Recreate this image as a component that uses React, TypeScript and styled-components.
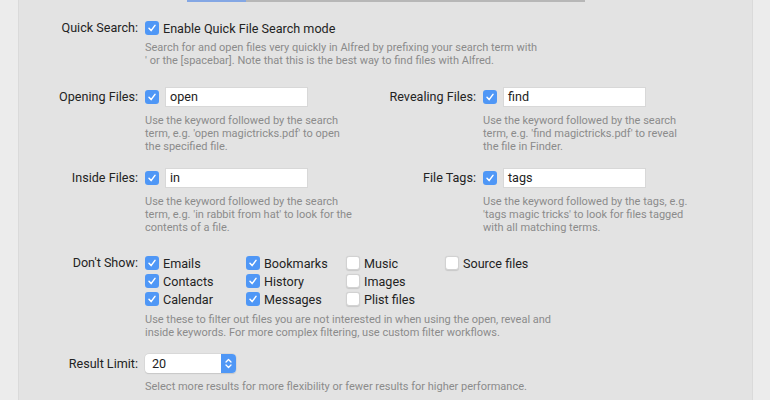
import React from "react";
import styled, { createGlobalStyle } from "styled-components";

const GlobalStyle = createGlobalStyle`
  html, body {
    margin: 0;
    padding: 0;
    background: #ececec;
    font-family: Roboto, "Liberation Sans", "Noto Sans", sans-serif;
    -webkit-font-smoothing: antialiased;
  }
`;

const Page = styled.div`
  width: 770px;
  height: 400px;
  display: flex;
  overflow: hidden;
  background: #ececec;
`;

const Panel = styled.div`
  margin-left: 18px;
  width: 735px;
  height: 400px;
  background: #e3e3e3;
  border-left: 1px solid #dadada;
  border-right: 1px solid #dadada;
  box-sizing: border-box;
  display: flex;
  flex-direction: column;
`;

const TabLine = styled.div`
  display: flex;
  margin-left: 168px;
  height: 2px;
`;

const TabSegment = styled.div<{ $active?: boolean; $w: number }>`
  width: ${(p) => p.$w}px;
  height: 2px;
  background: ${(p) => (p.$active ? "#84a7e4" : "#b7b7b7")};
`;

const Section = styled.div<{ $top: number }>`
  margin-top: ${(p) => p.$top}px;
  display: flex;
`;

const Field = styled.div<{ $width?: number }>`
  display: flex;
  align-items: flex-start;
  flex-shrink: 0;
  width: ${(p) => (p.$width ? `${p.$width}px` : "auto")};
`;

const Label = styled.div<{ $width: number; $h?: number }>`
  width: ${(p) => p.$width}px;
  flex-shrink: 0;
  text-align: right;
  font-size: 12.6px;
  color: #232323;
  height: ${(p) => p.$h ?? 20}px;
  line-height: ${(p) => p.$h ?? 20}px;
  padding-right: 7px;
  box-sizing: content-box;
  white-space: nowrap;
`;

const Body = styled.div`
  display: flex;
  flex-direction: column;
`;

const ControlRow = styled.div<{ $h?: number }>`
  display: flex;
  align-items: center;
  height: ${(p) => p.$h ?? 20}px;
`;

const Box = styled.span<{ $checked?: boolean }>`
  width: 14px;
  height: 14px;
  border-radius: 3px;
  box-sizing: border-box;
  flex-shrink: 0;
  display: inline-flex;
  align-items: center;
  justify-content: center;
  background: ${(p) => (p.$checked ? "#4f97f6" : "#ffffff")};
  border: ${(p) => (p.$checked ? "none" : "1px solid #d2d2d2")};
  box-shadow: ${(p) => (p.$checked ? "none" : "0 0.5px 1px rgba(0,0,0,0.12)")};
`;

const CheckText = styled.span`
  margin-left: 4px;
  font-size: 12.6px;
  color: #232323;
  white-space: nowrap;
`;

const TextInput = styled.div`
  margin-left: 6px;
  width: 143px;
  height: 20px;
  background: #ffffff;
  border: 1px solid #d8d8d8;
  box-sizing: border-box;
  font-size: 12.6px;
  color: #222;
  line-height: 18px;
  padding-left: 4px;
`;

const Desc = styled.div<{ $top?: number }>`
  margin-top: ${(p) => p.$top ?? 4}px;
  font-size: 11px;
  line-height: 13px;
  color: #8b8b8b;
  white-space: pre;
`;

const CheckGrid = styled.div`
  display: grid;
  grid-template-columns: 101px 100px 99px 120px;
  grid-auto-rows: 18px;
`;

const GridItem = styled.div`
  display: flex;
  align-items: center;
`;

const Select = styled.div`
  width: 91px;
  height: 19px;
  background: #fff;
  border-radius: 4px;
  box-shadow: 0 0 0 0.5px #cfcfcf, 0 0.5px 1px rgba(0,0,0,0.15);
  display: flex;
  overflow: hidden;
`;

const SelectValue = styled.div`
  flex: 1;
  font-size: 12.6px;
  color: #222;
  line-height: 19px;
  padding-left: 7px;
`;

const Stepper = styled.div`
  width: 15px;
  background: #4f97f6;
  display: flex;
  align-items: center;
  justify-content: center;
`;

const Check = () => (
  <svg width="10" height="10" viewBox="0 0 10 10">
    <path d="M2 5.3 L4.1 7.6 L8 2.4" fill="none" stroke="#fff" strokeWidth="1.5" strokeLinecap="round" strokeLinejoin="round" />
  </svg>
);

const CheckBox = ({ checked, label }: { checked?: boolean; label?: string }) => (
  <>
    <Box $checked={checked}>{checked && <Check />}</Box>
    {label && <CheckText>{label}</CheckText>}
  </>
);

const KeywordField = ({
  label,
  value,
  labelWidth,
  width,
  desc,
}: {
  label: string;
  value: string;
  labelWidth: number;
  width?: number;
  desc: string;
}) => (
  <Field $width={width}>
    <Label $width={labelWidth}>{label}</Label>
    <Body>
      <ControlRow>
        <CheckBox checked />
        <TextInput>{value}</TextInput>
      </ControlRow>
      <Desc $top={7}>{desc}</Desc>
    </Body>
  </Field>
);

const filters: { label: string; checked: boolean }[] = [
  { label: "Emails", checked: true },
  { label: "Bookmarks", checked: true },
  { label: "Music", checked: false },
  { label: "Source files", checked: false },
  { label: "Contacts", checked: true },
  { label: "History", checked: true },
  { label: "Images", checked: false },
  { label: "", checked: false },
  { label: "Calendar", checked: true },
  { label: "Messages", checked: true },
  { label: "Plist files", checked: false },
];

export default function App() {
  return (
    <Page>
      <GlobalStyle />
      <Panel>
        <TabLine>
          <TabSegment $active $w={59} />
          <TabSegment $w={339} />
        </TabLine>

        <Section $top={16}>
          <Field>
            <Label $width={119}>Quick Search:</Label>
            <Body>
              <ControlRow>
                <CheckBox checked label="Enable Quick File Search mode" />
              </ControlRow>
              <Desc $top={3}>
                {"Search for and open files very quickly in Alfred by prefixing your search term with\n' or the [spacebar]. Note that this is the best way to find files with Alfred."}
              </Desc>
            </Body>
          </Field>
        </Section>

        <Section $top={20}>
          <KeywordField
            label="Opening Files:"
            value="open"
            labelWidth={119}
            width={330}
            desc={"Use the keyword followed by the search\nterm, e.g. 'open magictricks.pdf' to open\nthe specified file."}
          />
          <KeywordField
            label="Revealing Files:"
            value="find"
            labelWidth={127}
            desc={"Use the keyword followed by the search\nterm, e.g. 'find magictricks.pdf' to reveal\nthe file in Finder."}
          />
        </Section>

        <Section $top={15}>
          <KeywordField
            label="Inside Files:"
            value="in"
            labelWidth={119}
            width={330}
            desc={"Use the keyword followed by the search\nterm, e.g. 'in rabbit from hat' to look for the\ncontents of a file."}
          />
          <KeywordField
            label="File Tags:"
            value="tags"
            labelWidth={127}
            desc={"Use the keyword followed by the tags, e.g.\n'tags magic tricks' to look for files tagged\nwith all matching terms."}
          />
        </Section>

        <Section $top={20}>
          <Field>
            <Label $width={119} $h={18}>Don't Show:</Label>
            <Body>
              <CheckGrid>
                {filters.map((f, i) => (
                  <GridItem key={i}>{f.label && <CheckBox checked={f.checked} label={f.label} />}</GridItem>
                ))}
              </CheckGrid>
              <Desc $top={5}>
                {"Use these to filter out files you are not interested in when using the open, reveal and\ninside keywords. For more complex filtering, use custom filter workflows."}
              </Desc>
            </Body>
          </Field>
        </Section>

        <Section $top={15}>
          <Field>
            <Label $width={119} $h={19}>Result Limit:</Label>
            <Body>
              <Select>
                <SelectValue>20</SelectValue>
                <Stepper>
                  <svg width="9" height="13" viewBox="0 0 9 13">
                    <path d="M2 5 L4.5 2.5 L7 5 M2 8 L4.5 10.5 L7 8" fill="none" stroke="#fff" strokeWidth="1.3" strokeLinecap="round" strokeLinejoin="round" />
                  </svg>
                </Stepper>
              </Select>
              <Desc $top={7}>Select more results for more flexibility or fewer results for higher performance.</Desc>
            </Body>
          </Field>
        </Section>
      </Panel>
    </Page>
  );
}
